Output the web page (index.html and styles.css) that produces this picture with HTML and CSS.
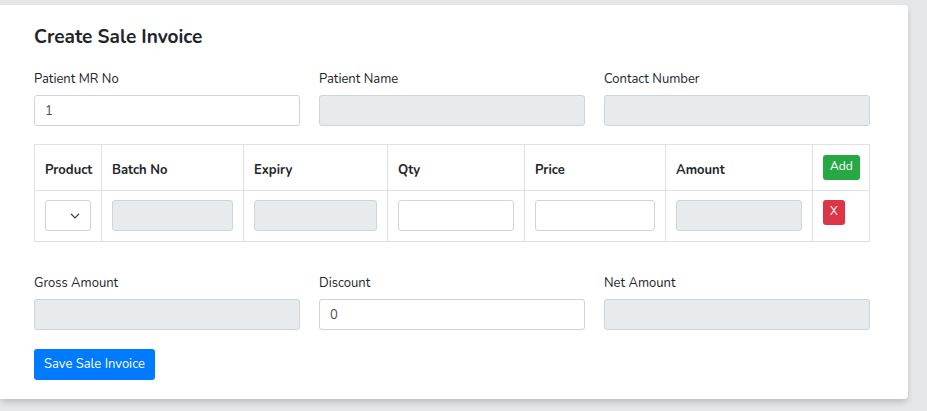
FILE: index.html
```html
<!DOCTYPE html>
<html lang="en">
<head>
<meta charset="utf-8">
<meta name="viewport" content="width=device-width, initial-scale=1">
<title>Create Sale Invoice</title>
<link rel="stylesheet" href="styles.css">
</head>
<body>
<main class="card">
  <form>
    <h1 class="title">Create Sale Invoice</h1>
    <div class="fields">
      <div class="field">
        <label for="mr">Patient MR No</label>
        <input class="control" id="mr" type="text" value="1">
      </div>
      <div class="field">
        <label for="name">Patient Name</label>
        <input class="control" id="name" type="text" readonly>
      </div>
      <div class="field">
        <label for="contact">Contact Number</label>
        <input class="control" id="contact" type="text" readonly>
      </div>
    </div>
    <table class="items">
      <colgroup>
        <col class="col-product">
        <col class="col-batch">
        <col class="col-expiry">
        <col class="col-qty">
        <col class="col-price">
        <col class="col-amount">
        <col class="col-action">
      </colgroup>
      <thead>
        <tr>
          <th id="h-product">Product</th>
          <th id="h-batch">Batch No</th>
          <th id="h-expiry">Expiry</th>
          <th id="h-qty">Qty</th>
          <th id="h-price">Price</th>
          <th id="h-amount">Amount</th>
          <th><button class="btn btn-small btn-add" type="button">Add</button></th>
        </tr>
      </thead>
      <tbody>
        <tr>
          <td>
            <div class="select">
              <select class="control" aria-labelledby="h-product"><option></option></select>
              <svg class="chevron" viewBox="0 0 16 16" aria-hidden="true"><path d="M2 5l6 6 6-6"/></svg>
            </div>
          </td>
          <td><input class="control" type="text" aria-labelledby="h-batch" readonly></td>
          <td><input class="control" type="text" aria-labelledby="h-expiry" readonly></td>
          <td><input class="control" type="text" aria-labelledby="h-qty"></td>
          <td><input class="control" type="text" aria-labelledby="h-price"></td>
          <td><input class="control" type="text" aria-labelledby="h-amount" readonly></td>
          <td><button class="btn btn-small btn-remove" type="button">X</button></td>
        </tr>
      </tbody>
    </table>
    <div class="fields">
      <div class="field">
        <label for="gross">Gross Amount</label>
        <input class="control" id="gross" type="text" readonly>
      </div>
      <div class="field">
        <label for="discount">Discount</label>
        <input class="control" id="discount" type="text" value="0">
      </div>
      <div class="field">
        <label for="net">Net Amount</label>
        <input class="control" id="net" type="text" readonly>
      </div>
    </div>
    <button class="btn btn-save" type="button">Save Sale Invoice</button>
  </form>
</main>
</body>
</html>
```
FILE: styles.css
```css
* {
  box-sizing: border-box;
}

body {
  margin: 0;
  padding: 5px 19px 12px 0;
  background: #e5e6ea;
  color: #212529;
  font-family: Nunito, Lato, sans-serif;
  font-size: 13px;
  line-height: 20px;
}

.card {
  padding: 20px 38px 19px 34px;
  background: #fff;
  border-radius: 0 4px 4px 0;
  box-shadow: 0 4px 6px -1px rgba(0, 0, 0, 0.18);
}

.title {
  margin: 0 0 20px;
  font-size: 19px;
  font-weight: 700;
  line-height: 24px;
}

.fields {
  display: grid;
  grid-template-columns: repeat(3, 1fr);
  gap: 19px;
}

.field label {
  display: block;
  margin-bottom: 6px;
}

.control {
  display: block;
  width: 100%;
  height: 31px;
  padding: 4px 10px;
  border: 1px solid #ced4da;
  border-radius: 3px;
  background: #fff;
  color: #495057;
  font: inherit;
  appearance: none;
}

.control:read-only:not(select) {
  background: #e8ebee;
}

.items {
  width: 100%;
  margin: 18px 0 31px;
  border-collapse: collapse;
  table-layout: fixed;
}

.items th,
.items td {
  padding: 10px;
  border: 1px solid #dee2e6;
  text-align: left;
  vertical-align: top;
}

.items th {
  font-weight: 700;
  vertical-align: bottom;
}

.items td {
  padding-top: 9px;
}

.col-product { width: 67px; }
.col-batch { width: 142px; }
.col-expiry { width: 144px; }
.col-qty { width: 137px; }
.col-price { width: 141px; }
.col-amount { width: 147px; }
.col-action { width: 57px; }

.select {
  position: relative;
}

.chevron {
  position: absolute;
  top: 11px;
  right: 11px;
  width: 10px;
  height: 10px;
  fill: none;
  stroke: #343a40;
  stroke-width: 2;
  stroke-linecap: round;
  stroke-linejoin: round;
  pointer-events: none;
}

.btn {
  display: block;
  border: 0;
  border-radius: 3px;
  color: #fff;
  font: inherit;
  font-weight: 400;
  cursor: pointer;
}

.btn-small {
  height: 25px;
  padding: 0 7px 3px;
  font-size: 12px;
}

.btn-add {
  background: #28a745;
}

.btn-remove {
  background: #dc3545;
}

.btn-save {
  height: 31px;
  margin-top: 19px;
  padding: 0 10px 2px;
  background: #007bff;
}
```
